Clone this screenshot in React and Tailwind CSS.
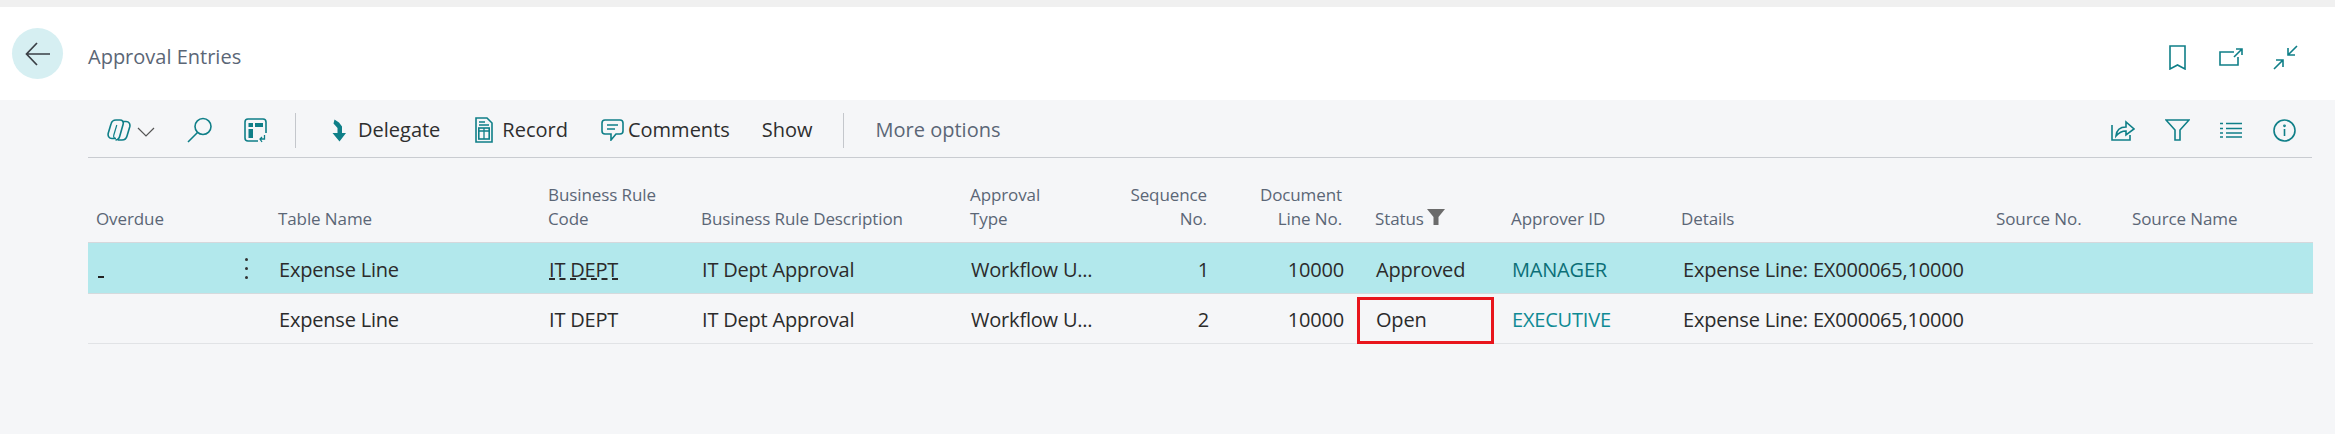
import React from "react";

const TEAL = "#0f7f88";

/* ---------------- Icons ---------------- */
const Svg = ({ w, h, children, className = "" }) => (
  <svg width={w} height={h} viewBox={`0 0 ${w} ${h}`} fill="none" stroke={TEAL} strokeWidth="1.6" className={`shrink-0 ${className}`}>
    {children}
  </svg>
);

const CopilotIcon = () => (
  <Svg w={24} h={22}>
    <path d="M13 1H9C6 1 4.500 3 4 5L1.300 14C.5 17 2 19.500 5 19.500H9" />
    <path d="M11 21h4c3 0 4.500-2 5-4l2.700-9C23.500 5 22 2.500 19 2.500h-4" />
    <path d="M13 1c2.500 0 3.800 1.800 3.200 4l-3.400 12c-.6 2.500-2 4-4.300 4" />
    <path d="M9 19.500c-1.800 0-2.800-1.500-2.200-3.500l3-10" strokeWidth="1.2" />
  </Svg>
);

const SearchIcon = () => (
  <Svg w={25} h={26}>
    <circle cx="16" cy="9.500" r="8" />
    <path d="M10.500 15.500 1 25" />
  </Svg>
);

const LayoutIcon = () => (
  <Svg w={23} h={25}>
    <path d="M14 23H4a3 3 0 0 1-3-3V4a3 3 0 0 1 3-3h15a3 3 0 0 1 3 3v11" />
    <rect x="4.500" y="5" width="4.500" height="4" fill={TEAL} stroke="none" />
    <rect x="11" y="5" width="8" height="4" fill={TEAL} stroke="none" />
    <rect x="4.500" y="11" width="4.500" height="9" fill={TEAL} stroke="none" />
    <path d="M20.500 17v4h-4M18 24l-2-3 2-2" strokeWidth="1.300" />
  </Svg>
);

const DelegateIcon = () => (
  <svg width="14" height="23" viewBox="0 0 14 23" className="shrink-0">
    <path d="M2.500 0.500 7 3.500 10 7.500V14H14L7.500 22.500 0.500 14H5.500V9L1.500 4.500z" fill={TEAL} />
  </svg>
);

const RecordIcon = () => (
  <Svg w={18} h={26}>
    <path d="M1 1h11l5 5v19H1z" />
    <path d="M4 5h6M4 8h10" strokeWidth="1.300" />
    <rect x="3.800" y="11" width="10.400" height="11" />
    <path d="M9 11v11M3.800 14h10.400" strokeWidth="1.300" />
  </Svg>
);

const CommentIcon = () => (
  <Svg w={23} h={22}>
    <path d="M4 1h15a3 3 0 0 1 3 3v8a3 3 0 0 1-3 3h-4l-5 6v-6H4a3 3 0 0 1-3-3V4a3 3 0 0 1 3-3z" />
    <path d="M6 6h11M6 10h8" />
  </Svg>
);

const BookmarkIcon = () => (
  <Svg w={17} h={25}>
    <path d="M1 1h15v23l-7.500-4L1 24z" />
  </Svg>
);

const OpenIcon = () => (
  <Svg w={24} h={18}>
    <path d="M15 4H1v13h18V9" />
    <path d="M15 9 23 1M17 1h6v6" />
  </Svg>
);

const CollapseIcon = () => (
  <Svg w={25} h={25}>
    <path d="M24 1 15 10M15 3v7h7" />
    <path d="M1 24l9-9M3 15h7v7" />
  </Svg>
);

const ShareIcon = () => (
  <Svg w={24} h={22}>
    <path d="M1 6v15h18v-5" />
    <path d="M5 17c.5-6 4-9 10-9V3l8 7-8 6v-4c-4 0-7 1.500-10 5z" />
  </Svg>
);

const FunnelIcon = () => (
  <Svg w={25} h={22}>
    <path d="M1 1h23l-9 10v10h-5V11z" />
  </Svg>
);

const ListIcon = () => (
  <Svg w={22} h={16}>
    <path d="M0 1.500h3M6 1.500h16M0 6.500h3M6 6.500h16M0 11h3M6 11h16M0 15h3M6 15h16" />
  </Svg>
);

const InfoIcon = () => (
  <Svg w={23} h={23}>
    <circle cx="11.500" cy="11.500" r="10.500" />
    <path d="M11.500 10v7" />
    <circle cx="11.500" cy="6.800" r="0.600" />
  </Svg>
);

/* ---------------- Table data ---------------- */
const COLS = "grid-cols-[137px_45px_270px_153px_269px_153px_100px_135px_153px_170px_315px_136px_189px]";

const rows = [
  { seq: "1", status: "Approved", approver: "MANAGER", selected: true },
  { seq: "2", status: "Open", approver: "EXECUTIVE" },
];

const Head = ({ children, right, className = "" }) => (
  <div className={`flex items-end pb-[11px] px-[8px] text-[17px] leading-[24px] tracking-[-0.1px] text-[#5b6676] ${right ? "justify-end text-right" : ""} ${className}`}>
    {children}
  </div>
);

const Cell = ({ children, right, className = "" }) => (
  <div className={`flex items-center pt-[3px] whitespace-nowrap ${right ? "justify-end pl-[9px] pr-[6px]" : "px-[9px]"} ${className}`}>
    {children}
  </div>
);

const Row = ({ r }) => (
  <div className={`grid ${COLS} ${r.selected ? "h-[51px] bg-[#b2e8ec] border-[#d5dadd]" : "h-[50px] border-[#e1e3e6]"} border-b text-[20px] tracking-[-0.2px] text-[#2b2b2b]`}>
    <Cell>{r.selected && <span className="mt-[15px] ml-[1px] h-[2px] w-[6px] bg-[#222]" />}</Cell>
    <div className="flex items-center justify-center pr-[2px]">
      {r.selected && (
        <span className="flex flex-col gap-[6px]">
          <span className="size-[3px] rounded-full bg-[#333]" />
          <span className="size-[3px] rounded-full bg-[#333]" />
          <span className="size-[3px] rounded-full bg-[#333]" />
        </span>
      )}
    </div>
    <Cell>Expense Line</Cell>
    <Cell>{r.selected ? <span className="underline decoration-dashed underline-offset-2">IT DEPT</span> : "IT DEPT"}</Cell>
    <Cell>IT Dept Approval</Cell>
    <Cell>Workflow U...</Cell>
    <Cell right>{r.seq}</Cell>
    <Cell right>10000</Cell>
    <Cell className="relative">
      <span className="ml-[17px]">{r.status}</span>
      {r.status === "Open" && (
        <span className="absolute left-[7px] top-[3px] h-[47px] w-[137px] border-[3px] border-[#e8151c]" />
      )}
    </Cell>
    <Cell className={r.selected ? "text-[#0b6f77]" : "text-[#0f8a94]"}>{r.approver}</Cell>
    <Cell className="pl-[10px]">Expense Line: EX000065,10000</Cell>
    <Cell />
    <Cell />
  </div>
);

export default function App() {
  return (
    <div className="h-[434px] w-[2335px] overflow-hidden bg-[#f5f6f8] font-['Open_Sans',sans-serif]">
      <div className="h-[7px] bg-[#f0f0f0]" />

      {/* title bar */}
      <div className="flex h-[93px] items-center bg-white pr-[37px]">
        <div className="ml-[12px] flex h-[51px] w-[51px] items-center justify-center rounded-full bg-[#d6eff2]">
          <svg width="26" height="24" viewBox="0 0 26 24" fill="none" stroke="#3a3f45" strokeWidth="1.700">
            <path d="M25 12H2M12 1 1.500 12 12 23" />
          </svg>
        </div>
        <h1 className="ml-[25px] mt-[7px] text-[20px] text-[#5b6676]">Approval Entries</h1>
        <div className="ml-auto mt-[7px] flex items-center">
          <BookmarkIcon />
          <span className="ml-[33px]"><OpenIcon /></span>
          <span className="ml-[30px]"><CollapseIcon /></span>
        </div>
      </div>

      {/* action bar */}
      <div className="ml-[88px] mr-[23px] flex h-[58px] items-center border-b border-[#c9ccd1] pt-[3px] text-[20px] text-[#2e2e2e]">
        <span className="ml-[19px]"><CopilotIcon /></span>
        <svg width="18" height="10" viewBox="0 0 18 10" fill="none" stroke="#555" strokeWidth="1.200" className="ml-[6px] mt-[3px]">
          <path d="M1 1l8 8 8-8" />
        </svg>
        <span className="ml-[32px]"><SearchIcon /></span>
        <span className="ml-[32px]"><LayoutIcon /></span>
        <span className="ml-[28px] h-[35px] w-px bg-[#c4c7cc]" />
        <span className="ml-[36px]"><DelegateIcon /></span>
        <span className="ml-[12px]">Delegate</span>
        <span className="ml-[35px]"><RecordIcon /></span>
        <span className="ml-[9px]">Record</span>
        <span className="ml-[33px]"><CommentIcon /></span>
        <span className="ml-[4px]">Comments</span>
        <span className="ml-[32px]">Show</span>
        <span className="ml-[30px] h-[35px] w-px bg-[#c4c7cc]" />
        <span className="ml-[32px] text-[#5b6676]">More options</span>
        <div className="ml-auto mr-[16px] flex items-center">
          <ShareIcon />
          <span className="ml-[30px]"><FunnelIcon /></span>
          <span className="ml-[30px]"><ListIcon /></span>
          <span className="ml-[31px]"><InfoIcon /></span>
        </div>
      </div>

      {/* table */}
      <div className="ml-[88px] mr-[22px]">
        <div className={`grid ${COLS} h-[85px] border-b border-[#d6d8dc]`}>
          <Head>Overdue</Head>
          <Head />
          <Head>Table Name</Head>
          <Head>Business Rule<br />Code</Head>
          <Head>Business Rule Description</Head>
          <Head>Approval<br />Type</Head>
          <Head right>Sequence<br />No.</Head>
          <Head right>Document<br />Line No.</Head>
          <Head className="pl-[25px]">
            Status
            <svg width="18" height="16" viewBox="0 0 18 16" fill="#6b6b6b" className="ml-[3px] mb-[6px]">
              <path d="M0 0h18l-6.500 8v8h-5V8z" />
            </svg>
          </Head>
          <Head>Approver ID</Head>
          <Head>Details</Head>
          <Head>Source No.</Head>
          <Head>Source Name</Head>
        </div>
        {rows.map((r) => (
          <Row key={r.seq} r={r} />
        ))}
      </div>
    </div>
  );
}
